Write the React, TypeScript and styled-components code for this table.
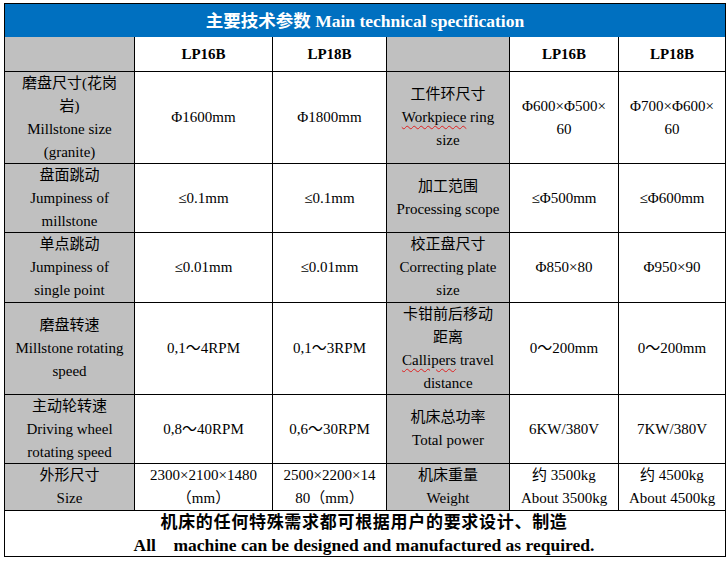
import React from "react";
import styled, { createGlobalStyle } from "styled-components";

const GlobalStyle = createGlobalStyle`
  body {
    margin: 0;
    background: #ffffff;
    font-family: "Liberation Serif", "Noto Sans CJK SC", serif;
    color: #000000;
  }
`;

const Page = styled.div`
  padding: 3px 0 0 4px;
`;

const SpecGrid = styled.div`
  display: grid;
  width: 722px;
  grid-template-columns: 130px 138px 114px 123px 109px 107px;
  grid-template-rows: 33px 35px 92px 69px 70px 92px 69px 47px 46px;
  border-left: 1px solid #000;
  border-top: 1px solid #000;
  box-sizing: border-box;
`;

const Cell = styled.div<{ $gray?: boolean; $bold?: boolean }>`
  display: flex;
  flex-direction: column;
  align-items: center;
  justify-content: center;
  text-align: center;
  border-right: 1px solid #000;
  border-bottom: 1px solid #000;
  background-color: ${p => (p.$gray ? "#c0c0c0" : "#ffffff")};
  font-size: 15px;
  line-height: 23px;
  font-weight: ${p => (p.$bold ? 700 : 400)};
  white-space: nowrap;
  overflow: hidden;
`;

const TitleBar = styled.div`
  grid-column: 1 / -1;
  display: flex;
  align-items: center;
  justify-content: center;
  background-color: #0070c0;
  border-right: 1px solid #000;
  color: #ffffff;
  font-size: 17.5px;
  font-weight: 700;
  padding-bottom: 3px;
`;

const Footer = styled.div`
  grid-column: 1 / -1;
  display: flex;
  flex-direction: column;
  align-items: center;
  justify-content: center;
  border-right: 1px solid #000;
  border-bottom: 1px solid #000;
  font-weight: 700;
  line-height: 23px;
  white-space: pre;
`;

const FooterCn = styled.div`
  font-size: 17px;
  letter-spacing: 0.7px;
  margin-left: -2px;
`;

const FooterEn = styled.div`
  font-size: 17.5px;
  margin-left: -2px;
`;

const Spell = styled.span`
  text-decoration: underline wavy #e02020;
  text-decoration-thickness: 1px;
  text-underline-offset: 3px;
`;

type Lines = React.ReactNode[];

interface Row {
  label: Lines;
  a: Lines;
  b: Lines;
  label2: Lines;
  c: Lines;
  d: Lines;
}

const rows: Row[] = [
  {
    label: ["磨盘尺寸(花岗", "岩)", "Millstone size", "(granite)"],
    a: ["Φ1600mm"],
    b: ["Φ1800mm"],
    label2: ["工件环尺寸", <><Spell>Workpiece</Spell> ring</>, "size"],
    c: ["Φ600×Φ500×", "60"],
    d: ["Φ700×Φ600×", "60"],
  },
  {
    label: ["盘面跳动", "Jumpiness of", "millstone"],
    a: ["≤0.1mm"],
    b: ["≤0.1mm"],
    label2: ["加工范围", "Processing scope"],
    c: ["≤Φ500mm"],
    d: ["≤Φ600mm"],
  },
  {
    label: ["单点跳动", "Jumpiness of", "single point"],
    a: ["≤0.01mm"],
    b: ["≤0.01mm"],
    label2: ["校正盘尺寸", "Correcting plate", "size"],
    c: ["Φ850×80"],
    d: ["Φ950×90"],
  },
  {
    label: ["磨盘转速", "Millstone rotating", "speed"],
    a: ["0,1～4RPM"],
    b: ["0,1～3RPM"],
    label2: ["卡钳前后移动", "距离", <><Spell>Callipers</Spell> travel</>, "distance"],
    c: ["0～200mm"],
    d: ["0～200mm"],
  },
  {
    label: ["主动轮转速", "Driving wheel", "rotating speed"],
    a: ["0,8～40RPM"],
    b: ["0,6～30RPM"],
    label2: ["机床总功率", "Total power"],
    c: ["6KW/380V"],
    d: ["7KW/380V"],
  },
  {
    label: ["外形尺寸", "Size"],
    a: ["2300×2100×1480", "（mm）"],
    b: ["2500×2200×14", "80（mm）"],
    label2: ["机床重量", "Weight"],
    c: ["约 3500kg", "About 3500kg"],
    d: ["约 4500kg", "About 4500kg"],
  },
];

const LinesOf = ({ lines }: { lines: Lines }) => (
  <>
    {lines.map((l, i) => (
      <div key={i}>{l}</div>
    ))}
  </>
);

export default function App() {
  return (
    <>
      <GlobalStyle />
      <Page>
        <SpecGrid>
          <TitleBar>主要技术参数 Main technical specification</TitleBar>

          <Cell $gray />
          <Cell $bold>LP16B</Cell>
          <Cell $bold>LP18B</Cell>
          <Cell $gray />
          <Cell $bold>LP16B</Cell>
          <Cell $bold>LP18B</Cell>

          {rows.map((r, i) => (
            <React.Fragment key={i}>
              <Cell $gray><LinesOf lines={r.label} /></Cell>
              <Cell><LinesOf lines={r.a} /></Cell>
              <Cell><LinesOf lines={r.b} /></Cell>
              <Cell $gray><LinesOf lines={r.label2} /></Cell>
              <Cell><LinesOf lines={r.c} /></Cell>
              <Cell><LinesOf lines={r.d} /></Cell>
            </React.Fragment>
          ))}

          <Footer>
            <FooterCn>机床的任何特殊需求都可根据用户的要求设计、制造</FooterCn>
            <FooterEn>All    machine can be designed and manufactured as required.</FooterEn>
          </Footer>
        </SpecGrid>
      </Page>
    </>
  );
}
